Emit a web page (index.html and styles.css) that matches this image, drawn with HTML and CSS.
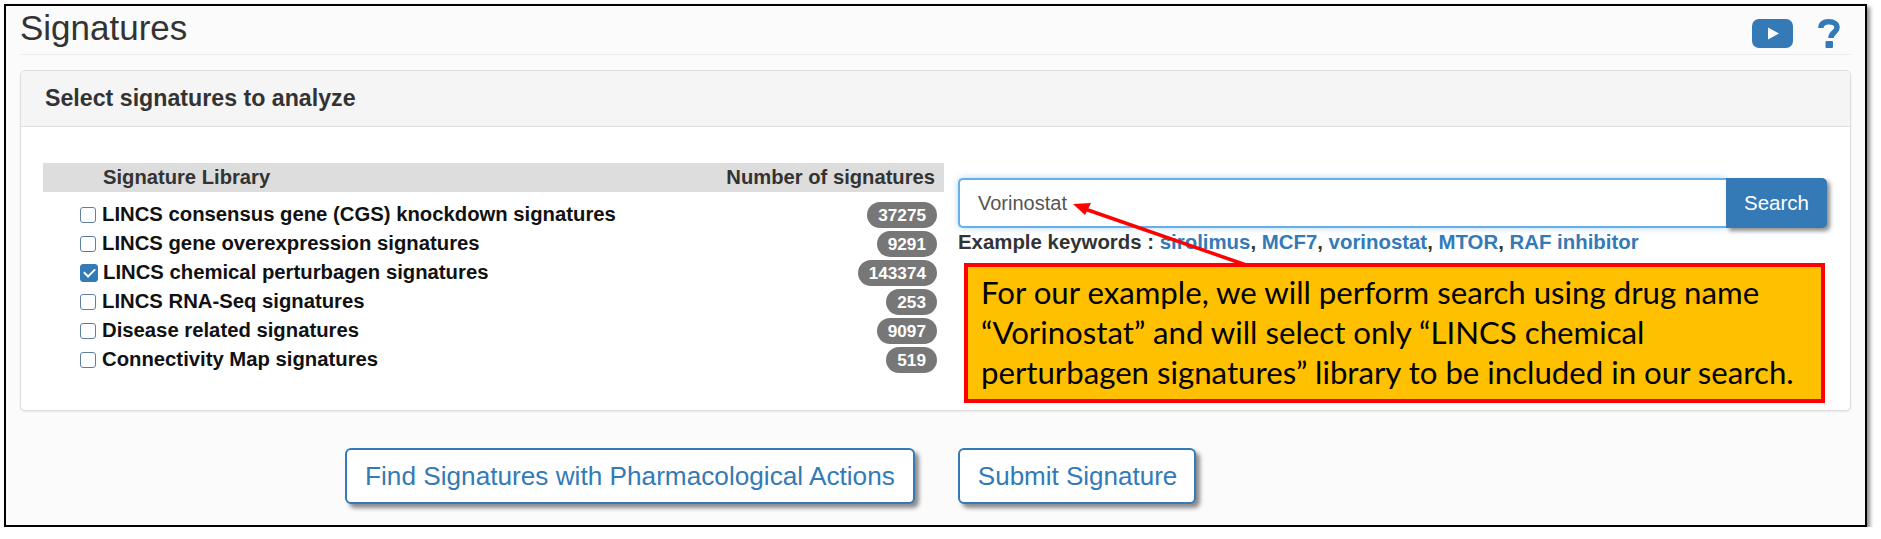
FILE: index.html
```html
<!DOCTYPE html>
<html lang="en">
<head>
<meta charset="utf-8">
<title>Signatures</title>
<link rel="stylesheet" href="styles.css">
</head>
<body>
<div class="frame">
  <header class="page-head">
    <h1 class="page-title">Signatures</h1>
    <div class="head-icons">
      <svg class="icon-video" viewBox="0 0 41 29" aria-hidden="true"><rect width="41" height="29" rx="7" fill="#337ab7"/><path d="M16 8.500 L27 14.500 L16 20.500 Z" fill="#fff"/></svg>
      <svg class="icon-help" viewBox="0 0 22 29" aria-hidden="true"><path d="M2.800 9 C3 4.500 6.500 2.800 11 2.800 C16 2.800 19 5.200 19 8.800 C19 13 13 13.500 13 19" fill="none" stroke="#337ab7" stroke-width="5.500"/><rect x="7.500" y="22" width="7.500" height="7" rx="1" fill="#337ab7"/></svg>
    </div>
  </header>

  <section class="panel">
    <h2 class="panel-heading">Select signatures to analyze</h2>
    <div class="panel-body">
      <div class="library">
        <div class="library-head"><span>Signature Library</span><span>Number of signatures</span></div>
        <label class="lib-row"><input type="checkbox"><span class="lib-name">LINCS consensus gene (CGS) knockdown signatures</span><span class="badge">37275</span></label>
        <label class="lib-row"><input type="checkbox"><span class="lib-name">LINCS gene overexpression signatures</span><span class="badge">9291</span></label>
        <label class="lib-row"><input type="checkbox" checked><span class="lib-name">LINCS chemical perturbagen signatures</span><span class="badge">143374</span></label>
        <label class="lib-row"><input type="checkbox"><span class="lib-name">LINCS RNA-Seq signatures</span><span class="badge">253</span></label>
        <label class="lib-row"><input type="checkbox"><span class="lib-name">Disease related signatures</span><span class="badge">9097</span></label>
        <label class="lib-row"><input type="checkbox"><span class="lib-name">Connectivity Map signatures</span><span class="badge">519</span></label>
      </div>
      <div class="search">
        <div class="search-bar"><div class="search-input">Vorinostat</div><div class="search-btn">Search</div></div>
        <p class="keywords">Example keywords : <a>sirolimus</a>, <a>MCF7</a>, <a>vorinostat</a>, <a>MTOR</a>, <a>RAF inhibitor</a></p>
      </div>
    </div>
  </section>

  <div class="actions">
    <div class="action-btn">Find Signatures with Pharmacological Actions</div>
    <div class="action-btn action-btn-small">Submit Signature</div>
  </div>

  <svg class="arrow" viewBox="0 0 180 66" aria-hidden="true"><path d="M176 63 L12 6" stroke="#f00" stroke-width="3.500" fill="none"/><path d="M0 1 L18 0 L12 12 Z" fill="#f00"/></svg>
  <div class="callout">For our example, we will perform search using drug name<br>“Vorinostat” and will select only “LINCS chemical<br>perturbagen signatures” library to be included in our search.</div>
</div>
</body>
</html>
```
FILE: styles.css
```css
* { box-sizing: border-box; }
html, body { margin: 0; padding: 0; background: #fff; }
body { font-family: "Liberation Sans", Arial, sans-serif; color: #333; overflow: hidden; }

.frame {
  position: relative;
  margin: 4px 0 0 4px;
  width: 1863px;
  height: 523px;
  padding: 0 14px 0 14px;
  background: #fbfbfb;
  border: 2px solid #000;
  box-shadow: 3px 3px 4px rgba(0, 0, 0, .45);
}

.page-head {
  display: flex;
  justify-content: space-between;
  height: 49px;
  border-bottom: 1px solid #eee;
}
.page-title {
  margin: 3px 0 0;
  font-size: 35px;
  line-height: 38px;
  font-weight: 400;
  color: #333;
}
.head-icons { display: flex; gap: 25px; padding: 13px 11px 0 0; }
.icon-video { width: 41px; height: 29px; }
.icon-help { width: 22px; height: 29px; }

.panel {
  margin-top: 15px;
  height: 341px;
  background: #fff;
  border: 1px solid #ddd;
  border-radius: 5px;
  box-shadow: 0 1px 2px rgba(0, 0, 0, .08);
}
.panel-heading {
  margin: 0;
  height: 56px;
  padding: 0 0 0 24px;
  display: flex;
  align-items: center;
  font-size: 23.200px;
  font-weight: 700;
  color: #333;
  background: #f5f5f5;
  border-bottom: 1px solid #ddd;
  border-radius: 4px 4px 0 0;
}
.panel-body {
  display: grid;
  grid-template-columns: 901px 869px;
  column-gap: 14px;
  padding: 36px 0 0 22px;
}

.library-head {
  display: flex;
  justify-content: space-between;
  height: 29px;
  padding: 0 9px 0 60px;
  align-items: center;
  background: #ddd;
  font-size: 20.200px;
  font-weight: 700;
  color: #333;
}
.lib-row {
  display: flex;
  align-items: center;
  height: 29px;
  padding: 0 7px 0 37px;
}
.library-head + .lib-row { margin-top: 8px; }
.lib-row input {
  appearance: none;
  flex: none;
  position: relative;
  width: 16px;
  height: 16px;
  margin: 0 6px 0 0;
  background: #fff;
  border: 1.500px solid #5f7fa6;
  border-radius: 3px;
}
.lib-row input:checked {
  width: 18px;
  height: 18px;
  margin-right: 5px;
  background: #337ab7;
  border-color: #337ab7;
}
.lib-row input:checked::after {
  content: "";
  position: absolute;
  left: 4.500px;
  top: 1.500px;
  width: 5px;
  height: 9px;
  border: solid #fff;
  border-width: 0 2.500px 2.500px 0;
  transform: rotate(45deg);
}
.lib-name { flex: 1; font-size: 20.300px; font-weight: 700; color: #111; }
.badge {
  height: 26px;
  padding: 0 11px;
  line-height: 26px;
  border-radius: 13px;
  background: #777;
  color: #fff;
  font-size: 17.200px;
  font-weight: 700;
}

.search { padding-top: 15px; }
.search-bar { display: flex; height: 50px; }
.search-input {
  width: 768px;
  padding: 0 18px;
  display: flex;
  align-items: center;
  background: #fff;
  border: 2px solid #66afe9;
  border-right: 0;
  border-radius: 5px 0 0 5px;
  box-shadow: 0 0 6px rgba(102, 175, 233, .5);
  font-size: 20px;
  color: #555;
}
.search-btn {
  width: 101px;
  display: flex;
  align-items: center;
  justify-content: center;
  background: #337ab7;
  border-radius: 0 5px 5px 0;
  box-shadow: 3px 3px 4px rgba(0, 0, 0, .45);
  font-size: 20.500px;
  color: #fff;
}
.keywords { margin: 0; line-height: 28px; font-size: 20.400px; font-weight: 700; color: #333; }
.keywords a { color: #337ab7; }

.actions { display: flex; gap: 43px; margin-top: 37px; padding-left: 325px; }
.action-btn {
  height: 56px;
  padding: 0 18px;
  display: flex;
  align-items: center;
  background: #fff;
  border: 2px solid #337ab7;
  border-radius: 6px;
  box-shadow: 4px 4px 4px rgba(0, 0, 0, .45);
  font-size: 26.200px;
  color: #337ab7;
}
.action-btn-small { font-size: 26px; padding: 0 17px 0 18px; }

.arrow { position: absolute; left: 1067px; top: 197px; width: 180px; height: 66px; }
.callout {
  position: absolute;
  left: 958px;
  top: 257px;
  width: 861px;
  height: 140px;
  padding: 5px 0 0 13px;
  background: #ffc000;
  border: 4px solid #f00;
  font-family: Lato, "Open Sans", sans-serif;
  font-size: 31.200px;
  line-height: 40px;
  color: #000;
}
```
